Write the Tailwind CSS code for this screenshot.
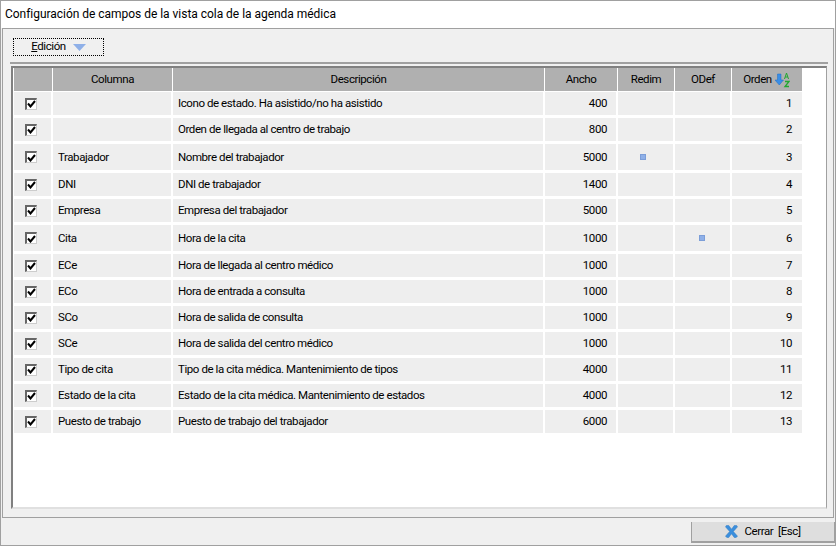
<!DOCTYPE html>
<html lang="es">
<head>
<meta charset="UTF-8">
<title>Configuración de campos</title>
<script src="https://cdn.jsdelivr.net/npm/@tailwindcss/browser@4"></script>
</head>
<body class="bg-white">
<div class="w-[837px] h-[547px] overflow-hidden font-['Roboto',sans-serif] text-[11.5px] tracking-[-0.42px] text-black">
  <div class="w-[836px] h-[546px] border border-[#a0a0a0] bg-[#f0f0f0] flex flex-col">
    <!-- Title -->
    <div class="h-[27px] shrink-0 bg-white pl-1 pt-[5px] text-[12px] tracking-[-0.03px] leading-[16px]">Configuración de campos de la vista cola de la agenda médica</div>

    <!-- Panel -->
    <div class="ml-px mr-px h-[490px] shrink-0 border border-[#a0a0a0] bg-[#f0f0f0] flex flex-col">
      <div class="h-[33px] shrink-0 pl-[10px] pt-[9px]">
        <button class="w-[91px] h-[18px] border border-dotted border-black flex items-center justify-center gap-[7px] leading-none">
          <span><span class="underline">E</span>dición</span>
          <svg width="13" height="7" viewBox="0 0 13 7"><path d="M0 0H13L6.5 7Z" fill="#8fb0e8"/></svg>
        </button>
      </div>
      <div class="ml-[7px] mr-[5px] h-[447px] border-t-2 border-[#a0a0a0] pt-[2px]">
        <div class="ml-px mr-px h-[443px] border-l-2 border-t-2 border-l-[#808080] border-t-[#808080] border-r border-r-[#a0a0a0] border-b-2 border-b-[#e0e0e0] bg-white pl-px">
          <!-- Header -->
          <div class="grid grid-cols-[38px_119px_371px_72px_56px_56px_70px] gap-px h-[22px] text-center leading-[23px] mb-[2px]">
            <div class="bg-[#b0b0b0]"></div>
            <div class="bg-[#b0b0b0]">Columna</div>
            <div class="bg-[#b0b0b0]">Descripción</div>
            <div class="bg-[#b0b0b0]">Ancho</div>
            <div class="bg-[#b0b0b0]">Redim</div>
            <div class="bg-[#b0b0b0]">ODef</div>
            <div class="bg-[#b0b0b0] flex items-center justify-center gap-[3px] pr-[1px]">Orden
              <svg width="15" height="16" viewBox="0 0 15 16"><path d="M2.5 2H6V8H8.5L4.25 13L0 8H2.5Z" fill="#3a8ee6" stroke="#1f6fc4" stroke-width=".5"/><path d="M9.5 7L11.5 1L13.5 7M10.3 5H12.7" fill="none" stroke="#22a830" stroke-width="1"/><path d="M10 9.5H14L10 14.5H14" fill="none" stroke="#22a830" stroke-width="1.3"/></svg>
            </div>
          </div>
          <!-- Rows -->
          <div id="rows" class="grid grid-cols-[37px_118px_370px_71px_55px_55px_70px] grid-rows-[23px_23px_26px_23px_23px_26px_repeat(7,23px)] gap-x-[2px] gap-y-[3px]"></div>
        </div>
      </div>
    </div>

    <!-- Footer -->
    <div class="h-[28px] shrink-0 flex justify-end items-start pt-[4px]">
      <button class="w-[144px] h-[21px] bg-[#dedede] border-b-2 border-r border-b-[#a0a0a0] border-r-[#a0a0a0] border-l border-l-[#a0a0a0] flex items-center justify-center gap-[6px] leading-none">
        <svg width="13" height="13" viewBox="0 0 14 14"><path d="M1.5 .5L4 .5L7 4.5L10 .5L12.5 .5L13.5 2L9 7L13.5 12L12 13.5L10 13.5L7 9.5L4 13.5L2 13.5L.5 12L5 7L.5 2Z" fill="#3b8fdd" stroke="#2a76c0" stroke-width=".5"/></svg>
        <span>Cerrar&nbsp; [Esc]</span>
      </button>
    </div>
  </div>
</div>
<script>
var data = [
  ["", "Icono de estado. Ha asistido/no ha asistido", 400, 0, 0],
  ["", "Orden de llegada al centro de trabajo", 800, 0, 0],
  ["Trabajador", "Nombre del trabajador", 5000, 1, 0],
  ["DNI", "DNI de trabajador", 1400, 0, 0],
  ["Empresa", "Empresa del trabajador", 5000, 0, 0],
  ["Cita", "Hora de la cita", 1000, 0, 1],
  ["ECe", "Hora de llegada al centro médico", 1000, 0, 0],
  ["ECo", "Hora de entrada a consulta", 1000, 0, 0],
  ["SCo", "Hora de salida de consulta", 1000, 0, 0],
  ["SCe", "Hora de salida del centro médico", 1000, 0, 0],
  ["Tipo de cita", "Tipo de la cita médica. Mantenimiento de tipos", 4000, 0, 0],
  ["Estado de la cita", "Estado de la cita médica. Mantenimiento de estados", 4000, 0, 0],
  ["Puesto de trabajo", "Puesto de trabajo del trabajador", 6000, 0, 0]
];
var check = '<div class="bg-[#eee] flex items-center justify-center pr-[3px]"><span class="w-[12px] h-[12px] border-l-2 border-t-2 border-l-[#666] border-t-[#666] border-r border-b border-r-[#ccc] border-b-[#ccc] bg-white flex items-center justify-center"><svg width="9" height="8" viewBox="0 0 9 8"><path d="M1 3.5L3.5 6.5L8 1" fill="none" stroke="#000" stroke-width="2"/></svg></span></div>';
var dot = '<span class="w-[6px] h-[6px] bg-[#8fb0e8] border border-[#7c9ed8]"></span>';
var html = "";
data.forEach(function (r, i) {
  html += check;
  html += '<div class="bg-[#eee] flex items-center pl-[5px] pt-px">' + r[0] + '</div>';
  html += '<div class="bg-[#eee] flex items-center pl-[5px] pt-px">' + r[1] + '</div>';
  html += '<div class="bg-[#eee] flex items-center justify-end pr-[9px] pt-px">' + r[2] + '</div>';
  html += '<div class="bg-[#eee] flex items-center justify-center pr-[5px]">' + (r[3] ? dot : '') + '</div>';
  html += '<div class="bg-[#eee] flex items-center justify-center pr-px">' + (r[4] ? dot : '') + '</div>';
  html += '<div class="bg-[#eee] flex items-center justify-end pr-[10px] pt-px">' + (i + 1) + '</div>';
});
document.getElementById("rows").innerHTML = html;
</script>
</body>
</html>
